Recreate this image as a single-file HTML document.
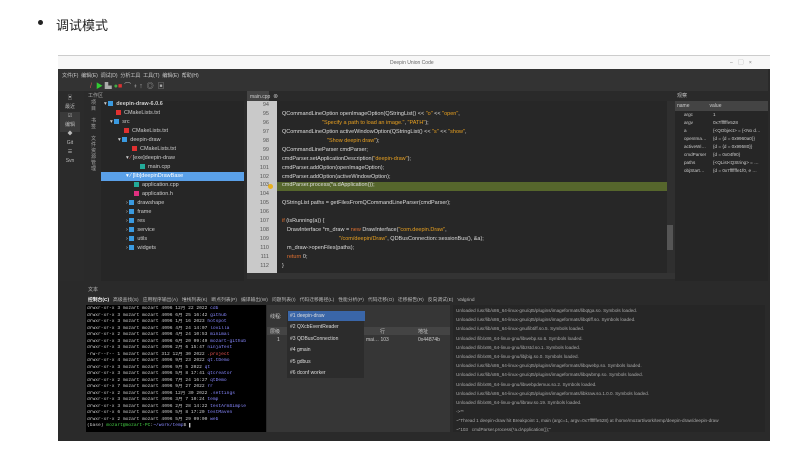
<!DOCTYPE html><html><head><meta charset="utf-8"><style>
*{margin:0;padding:0;box-sizing:border-box}
body{width:800px;height:459px;background:#fff;font-family:"Liberation Sans","Noto Sans CJK SC",sans-serif;position:relative;overflow:hidden}
.a{position:absolute}
.t{font-size:5px;color:#ccc;white-space:nowrap}
.code div{height:8.95px;line-height:8.95px;font-size:5.5px;color:#ddd;white-space:nowrap;padding-left:5px}
.g div{height:8.95px;line-height:8.95px;font-size:5.5px;color:#555;text-align:right;padding-right:8px}
.s{color:#e8a020}.k{color:#e07030}
.tree div{height:9px;line-height:9px;font-size:5.5px;color:#ccc;white-space:nowrap}
.ic{display:inline-block;width:5px;height:5px;margin-right:3px;vertical-align:-0.5px}
.term div{height:6.5px;line-height:6.5px;font-family:"Liberation Mono",monospace;font-size:4.6px;color:#ccc;white-space:nowrap;overflow:hidden}
.out div{height:9.2px;line-height:9.2px;font-size:4.6px;color:#aaa;white-space:nowrap}
</style></head><body>
<div class="a" style="left:38px;top:20px;width:5px;height:5px;border-radius:50%;background:#222"></div>
<div class="a" style="left:56px;top:15px;font-size:13px;color:#222">调试模式</div>
<div class="a" style="left:58px;top:55px;width:712px;height:386px;background:#2a2a2a;border-top:1px solid #ccc"></div>
<div class="a" style="left:58px;top:56px;width:712px;height:13px;background:#f7f7f7"></div>
<div class="a t" style="left:390px;top:60px;color:#666">Deepin Union Code</div>
<div class="a t" style="left:730px;top:59px;color:#777">–&nbsp;&nbsp;&nbsp;&nbsp;▢&nbsp;&nbsp;&nbsp;&nbsp;×</div>
<div class="a" style="left:58px;top:69px;width:710px;height:22px;background:#333"></div>
<div class="a t" style="left:62px;top:72px">文件(F)&nbsp;&nbsp;编辑(E)&nbsp;&nbsp;调试(D)&nbsp;&nbsp;分析工具&nbsp;&nbsp;工具(T)&nbsp;&nbsp;编辑(E)&nbsp;&nbsp;帮助(H)</div>
<div class="a" style="left:90px;top:81px;font-size:7px;color:#c55;white-space:nowrap">/&nbsp;&nbsp;<span style="color:#3c3">▶</span> <span style="color:#aaa">▙</span> <span style="color:#4a4">●</span><span style="color:#d33">■</span> <span style="color:#aaa">⌒ ⍖ ↑&nbsp; ◎&nbsp; ▣</span></div>
<div class="a" style="left:58px;top:91px;width:26px;height:190px;background:#2b2b2b"></div>
<div class="a" style="left:60px;top:112px;width:20px;height:20px;background:#3a3a3a"></div>
<div class="a t" style="left:64px;top:94px;line-height:9px;color:#bbb;text-align:center;width:12px">▣<br>最近<br>☑<br>编辑<br>◆<br>Git<br>☰<br>Svn</div>
<div class="a t" style="left:91px;top:100px;width:7px;line-height:6px;font-size:5px;color:#aaa;white-space:normal">项目<br><br>书签<br><br>文件资源管理</div>
<div class="a t" style="left:88px;top:92px;color:#aaa">工作区</div>
<div class="a" style="left:101px;top:101px;width:143px;height:180px;background:#262626"></div>
<div class="a" style="left:101px;top:172px;width:143px;height:9px;background:#5aa0e8"></div>
<div class="a tree" style="left:104px;top:100px">
<div>▾ <i class="ic" style="background:#3a9ae0"></i><b>deepin-draw-6.0.6</b></div>
<div style="padding-left:12px"><i class="ic" style="background:#e03030"></i>CMakeLists.txt</div>
<div style="padding-left:6px">▾ <i class="ic" style="background:#3a9ae0"></i>src</div>
<div style="padding-left:20px"><i class="ic" style="background:#e03030"></i>CMakeLists.txt</div>
<div style="padding-left:14px">▾ <i class="ic" style="background:#3a9ae0"></i>deepin-draw</div>
<div style="padding-left:28px"><i class="ic" style="background:#e03030"></i>CMakeLists.txt</div>
<div style="padding-left:22px">▾ <span style="color:#c55">⁄</span> [exe]deepin-draw</div>
<div style="padding-left:36px"><i class="ic" style="background:#2a9"></i>main.cpp</div>
<div style="padding-left:22px;color:#fff">▾ ⁄ [lib]deepinDrawBase</div>
<div style="padding-left:30px"><i class="ic" style="background:#2a9"></i>application.cpp</div>
<div style="padding-left:30px"><i class="ic" style="background:#e03080"></i>application.h</div>
<div style="padding-left:22px">› <i class="ic" style="background:#3a9ae0"></i>drawshape</div>
<div style="padding-left:22px">› <i class="ic" style="background:#3a9ae0"></i>frame</div>
<div style="padding-left:22px">› <i class="ic" style="background:#3a9ae0"></i>res</div>
<div style="padding-left:22px">› <i class="ic" style="background:#3a9ae0"></i>service</div>
<div style="padding-left:22px">› <i class="ic" style="background:#3a9ae0"></i>utils</div>
<div style="padding-left:22px">› <i class="ic" style="background:#3a9ae0"></i>widgets</div>
</div>
<div class="a" style="left:247px;top:91px;width:22px;height:10px;background:#444"></div>
<div class="a t" style="left:250px;top:93px">main.cpp &nbsp;<span style="color:#ddd">⊗</span></div>
<div class="a" style="left:247px;top:101px;width:30px;height:172px;background:#c9c9c9"></div>
<div class="a" style="left:277px;top:101px;width:390px;height:172px;background:#272727"></div>
<div class="a" style="left:277px;top:182px;width:390px;height:9px;background:#56662c"></div>
<div class="a" style="left:247px;top:273px;width:428px;height:6px;background:#333"></div>
<div class="a" style="left:667px;top:101px;width:8px;height:172px;background:#2f2f2f"></div>
<div class="a" style="left:667px;top:225px;width:6px;height:25px;background:#555"></div>
<div class="a g" style="left:247px;top:101px;width:30px"><div>94</div><div>95</div><div>96</div><div>97</div><div>98</div><div>99</div><div>100</div><div>101</div><div>102</div><div>103</div><div>104</div><div>105</div><div>106</div><div>107</div><div>108</div><div>109</div><div>110</div><div>111</div><div>112</div></div>
<div class="a" style="left:268px;top:184px;width:5px;height:5px;border-radius:50%;background:#e8b020"></div>
<div class="a code" style="left:277px;top:101px">
<div></div>
<div>QCommandLineOption openImageOption(QStringList() &lt;&lt; <span class="s">"o"</span> &lt;&lt; <span class="s">"open"</span>,</div>
<div style="padding-left:45px"><span class="s">"Specify a path to load an image."</span>, <span class="s">"PATH"</span>);</div>
<div>QCommandLineOption activeWindowOption(QStringList() &lt;&lt; <span class="s">"s"</span> &lt;&lt; <span class="s">"show"</span>,</div>
<div style="padding-left:50px"><span class="s">"Show deepin draw"</span>);</div>
<div>QCommandLineParser cmdParser;</div>
<div>cmdParser.setApplicationDescription(<span class="s">"deepin-draw"</span>);</div>
<div>cmdParser.addOption(openImageOption);</div>
<div>cmdParser.addOption(activeWindowOption);</div>
<div>cmdParser.process(*a.dApplication());</div>
<div></div>
<div>QStringList paths = getFilesFromQCommandLineParser(cmdParser);</div>
<div></div>
<div><span class="k">if</span> (isRunning(a)) {</div>
<div style="padding-left:10px">DrawInterface *m_draw = <span class="k">new</span> DrawInterface(<span class="s">"com.deepin.Draw"</span>,</div>
<div style="padding-left:62px"><span class="s">"/com/deepin/Draw"</span>, QDBusConnection::sessionBus(), &amp;a);</div>
<div style="padding-left:10px">m_draw-&gt;openFiles(paths);</div>
<div style="padding-left:10px"><span class="k">return</span> 0;</div>
<div>}</div>
</div>
<div class="a t" style="left:677px;top:92px;color:#bbb">观察</div>
<div class="a" style="left:675px;top:101px;width:93px;height:10px;background:#444"></div>
<div class="a" style="left:675px;top:111px;width:93px;height:170px;background:#262626"></div>
<div class="a t" style="left:677px;top:102px;line-height:8px">name<span style="margin-left:20px">value</span></div>
<div class="a t" style="left:684px;top:111px;line-height:8px;font-size:4.6px">argc<br>argv<br>a<br>openIma…<br>activeWi…<br>cmdParser<br>paths<br>objStart…</div>
<div class="a t" style="left:713px;top:111px;line-height:8px;font-size:4.6px">1<br>0x7ffffffe528<br>{&lt;QObject&gt; = {&lt;No d…<br>{d = {d = 0x9960a0}}<br>{d = {d = 0x99580}}<br>{d = 0x04f90}<br>{&lt;QList&lt;QString&gt; = …<br>{d = 0x7ffffffe1f0, e …</div>
<div class="a t" style="left:88px;top:286px;color:#bbb">文本</div>
<div class="a t" style="left:88px;top:296px;font-size:4.8px;color:#bbb"><b style="color:#fff">控制台(C)</b>&nbsp;&nbsp;&nbsp;高级查找(S)&nbsp;&nbsp;&nbsp;应用程序输出(A)&nbsp;&nbsp;&nbsp;堆栈列表(K)&nbsp;&nbsp;&nbsp;断点列表(P)&nbsp;&nbsp;&nbsp;编译输出(W)&nbsp;&nbsp;&nbsp;问题列表(I)&nbsp;&nbsp;&nbsp;代码迁移路径(L)&nbsp;&nbsp;&nbsp;性能分析(P)&nbsp;&nbsp;&nbsp;代码迁移(O)&nbsp;&nbsp;&nbsp;迁移报告(R)&nbsp;&nbsp;&nbsp;反向调试(E)&nbsp;&nbsp;&nbsp;Valgrind</div>
<div class="a" style="left:86px;top:305px;width:180px;height:127px;background:#000"></div>
<div class="a term" style="left:87px;top:306px;width:178px">
<div>drwxr-xr-x 3 mozart mozart 4096 12月 22 2022 <span style="color:#88f">cdb</span></div>
<div>drwxr-xr-x 3 mozart mozart 4096 6月 25 16:42 <span style="color:#88f">github</span></div>
<div>drwxr-xr-x 3 mozart mozart 4096 1月 16 2023 <span style="color:#88f">hotspot</span></div>
<div>drwxr-xr-x 3 mozart mozart 4096 4月 24 14:07 <span style="color:#88f">lovilla</span></div>
<div>drwxr-xr-x 2 mozart mozart 4096 4月 24 10:53 <span style="color:#88f">minimal</span></div>
<div>drwxr-xr-x 3 mozart mozart 4096 6月 20 09:49 <span style="color:#88f">mozart-github</span></div>
<div>drwxr-xr-x 3 mozart mozart 4096 2月 6 15:47 <span style="color:#88f">ninjaTest</span></div>
<div>-rw-r--r-- 1 mozart mozart 312 12月 30 2022 <span style="color:#e55">.project</span></div>
<div>drwxr-xr-x 4 mozart mozart 4096 9月 23 2022 <span style="color:#88f">qt.tDemo</span></div>
<div>drwxr-xr-x 3 mozart mozart 4096 9月 5 2022 <span style="color:#88f">qt</span></div>
<div>drwxr-xr-x 3 mozart mozart 4096 5月 8 17:41 <span style="color:#88f">qtcreator</span></div>
<div>drwxr-xr-x 2 mozart mozart 4096 7月 24 16:27 <span style="color:#88f">qtDemo</span></div>
<div>drwxr-xr-x 7 mozart mozart 4096 9月 27 2022 <span style="color:#88f">rr</span></div>
<div>drwxr-xr-x 2 mozart mozart 4096 12月 30 2022 <span style="color:#88f">.settings</span></div>
<div>drwxr-xr-x 3 mozart mozart 4096 3月 7 10:24 <span style="color:#88f">temp</span></div>
<div>drwxr-xr-x 3 mozart mozart 4096 2月 28 14:22 <span style="color:#88f">testArmSimple</span></div>
<div>drwxr-xr-x 6 mozart mozart 4096 5月 8 17:20 <span style="color:#88f">testMaven</span></div>
<div>drwxr-xr-x 2 mozart mozart 4096 5月 29 09:00 <span style="color:#88f">web</span></div>
<div>(base) <span style="color:#4c4">mozart@mozart-PC</span>:<span style="color:#88f">~/work/temp</span>$ ▌</div>
</div>
<div class="a" style="left:267px;top:305px;width:183px;height:127px;background:#363636"></div>
<div class="a t" style="left:270px;top:313px">线程:</div>
<div class="a" style="left:267px;top:327px;width:183px;height:8px;background:#444"></div>
<div class="a t" style="left:270px;top:328px">层级</div>
<div class="a t" style="left:380px;top:328px">行</div>
<div class="a t" style="left:418px;top:328px">地址</div>
<div class="a t" style="left:277px;top:337px">1</div>
<div class="a t" style="left:366px;top:337px">mai… 103</div>
<div class="a t" style="left:418px;top:337px">0x44874b</div>
<div class="a" style="left:287px;top:311px;width:77px;height:67px;background:#2c2c2c"></div>
<div class="a" style="left:288px;top:311px;width:77px;height:10px;background:#3a66a8"></div>
<div class="a t" style="left:290px;top:310.5px;line-height:11.5px;color:#ddd">#1 deepin-draw<br>#2 QXcbEventReader<br>#3 QDBusConnection<br>#4 gmain<br>#5 gdbus<br>#6 dconf worker</div>
<div class="a" style="left:453px;top:305px;width:312px;height:127px;background:#262626"></div>
<div class="a out" style="left:456px;top:306px">
<div>Unloaded /usr/lib/x86_64-linux-gnu/qt5/plugins/imageformats/libqtga.so. Symbols loaded.</div>
<div>Unloaded /usr/lib/x86_64-linux-gnu/qt5/plugins/imageformats/libqtiff.so. Symbols loaded.</div>
<div>Unloaded /usr/lib/x86_64-linux-gnu/libtiff.so.5. Symbols loaded.</div>
<div>Unloaded /lib/x86_64-linux-gnu/libwebp.so.6. Symbols loaded.</div>
<div>Unloaded /lib/x86_64-linux-gnu/libzstd.so.1. Symbols loaded.</div>
<div>Unloaded /lib/x86_64-linux-gnu/libjbig.so.0. Symbols loaded.</div>
<div>Unloaded /usr/lib/x86_64-linux-gnu/qt5/plugins/imageformats/libqwebp.so. Symbols loaded.</div>
<div>Unloaded /usr/lib/x86_64-linux-gnu/qt5/plugins/imageformats/libqwbmp.so. Symbols loaded.</div>
<div>Unloaded /lib/x86_64-linux-gnu/libwebpdemux.so.2. Symbols loaded.</div>
<div>Unloaded /usr/lib/x86_64-linux-gnu/qt5/plugins/imageformats/libkraw.so.1.0.0. Symbols loaded.</div>
<div>Unloaded /lib/x86_64-linux-gnu/libraw.so.19. Symbols loaded.</div>
<div>-&gt;**</div>
<div>~"Thread 1 deepin-draw hit Breakpoint 1, main (argc=1, argv=0x7ffffffe528) at /home/mozart/work/temp/deepin-draw/deepin-draw</div>
<div>~"103 &nbsp;&nbsp;cmdParser.process(*a.dApplication());"</div>
</div>
</body></html>
